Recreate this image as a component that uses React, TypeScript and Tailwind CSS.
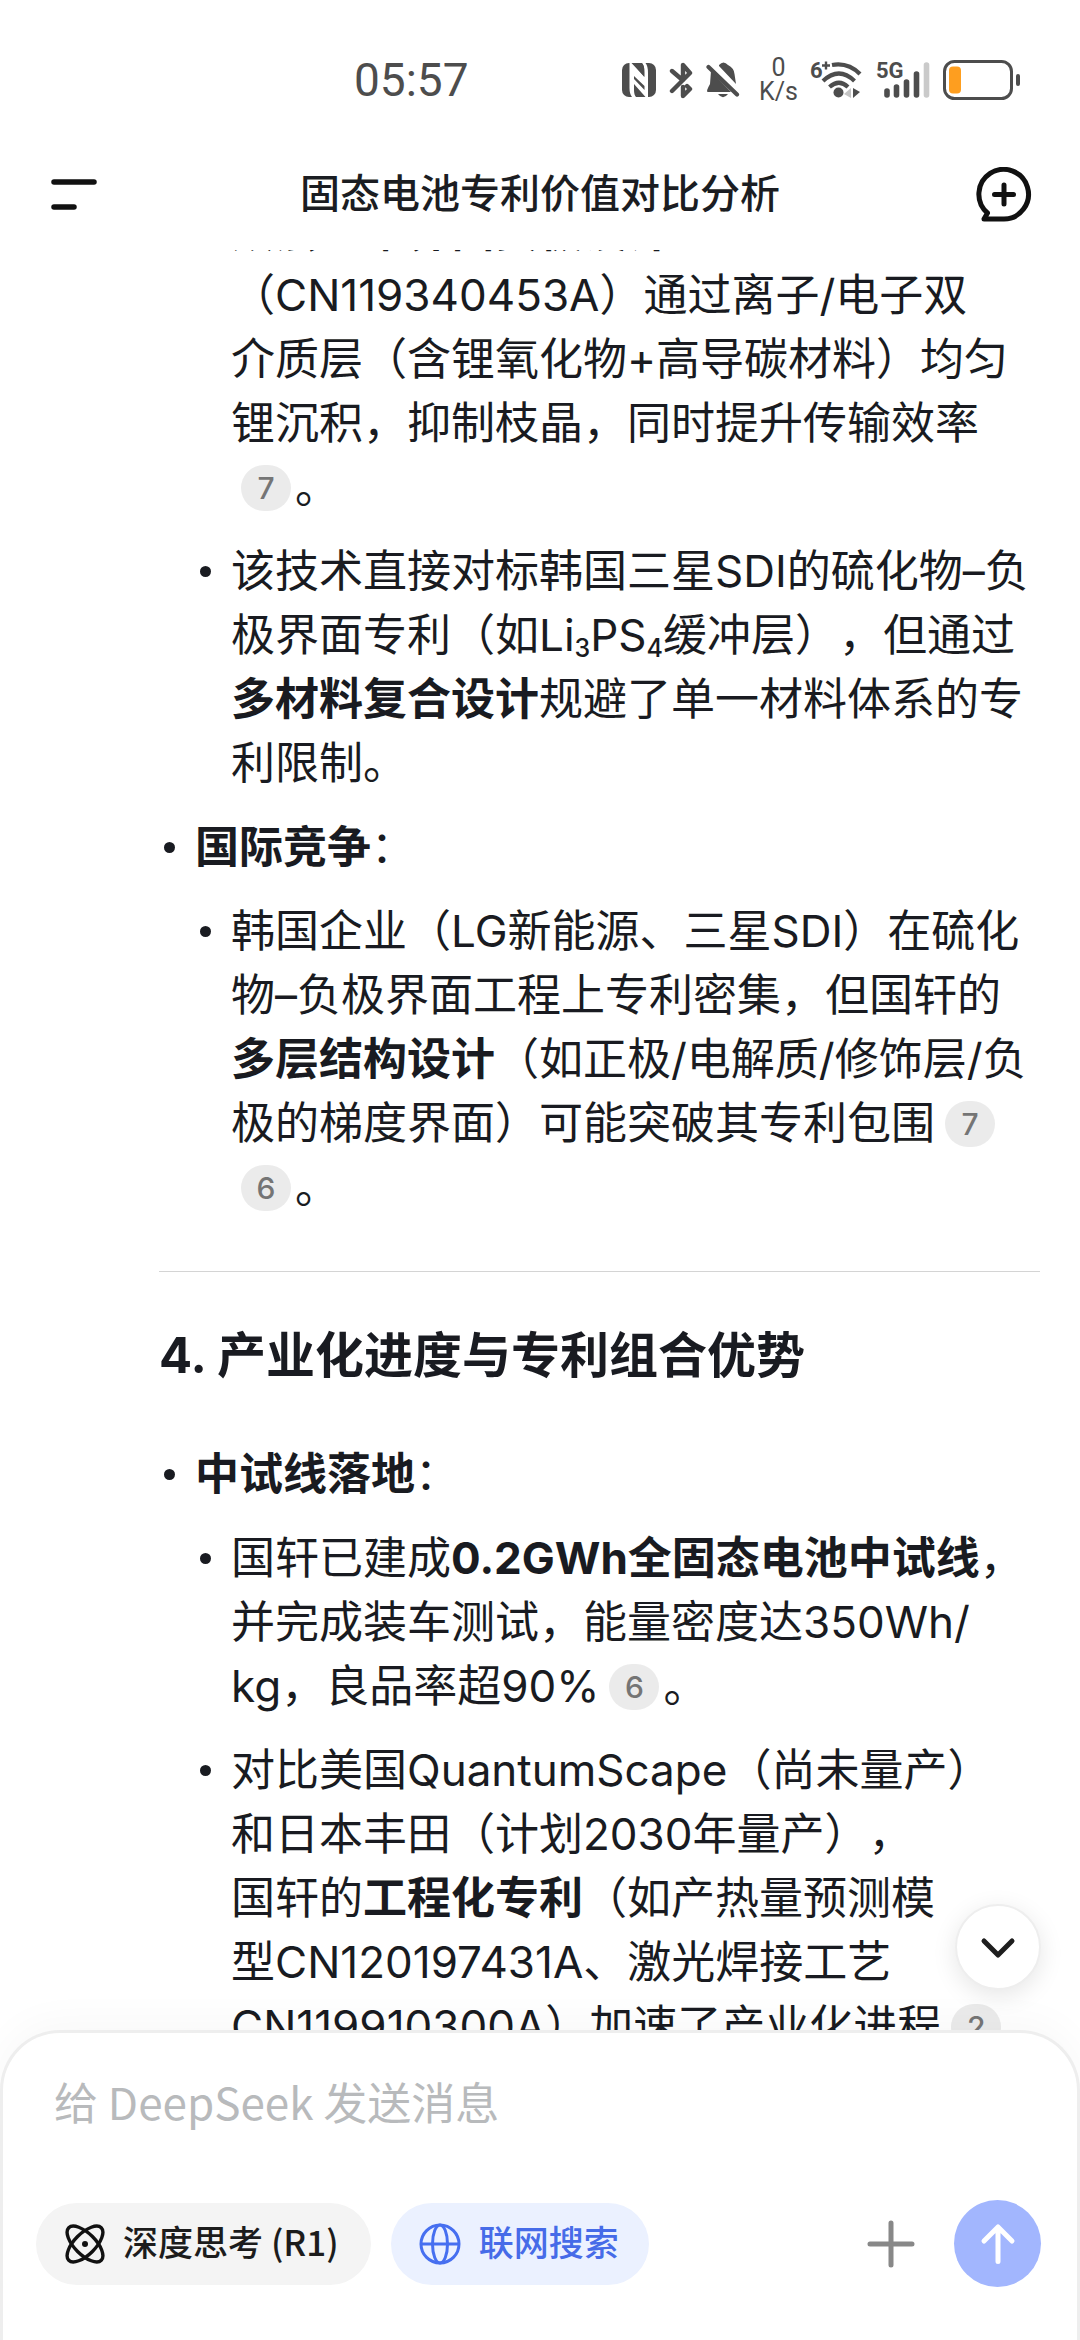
import React from "react";

const cjk = "font-['Noto_Sans_CJK_SC',sans-serif]";

function NfcIcon() {
  return (
    <svg viewBox="0 0 34 34" className="h-[34px] w-[34px]" aria-hidden="true">
      <rect width="34" height="34" rx="7" fill="#4d4d4d" />
      <path d="M7.500 0 H10.500 L22 13.500 V7 Q22 2 20 0 H23.500 Q26 3 26 10 V34 L23.500 34 L12 21 V27 Q12 32 14 34 H10 Q7.500 31 7.500 25Z" fill="#fff" />
      <path d="M9.500 0 H19.500 Q22.500 2 22.500 9 V27 L12 16 V13 L22.500 23 V14Z" fill="#4d4d4d" />
    </svg>
  );
}

function BluetoothIcon() {
  return (
    <svg viewBox="0 0 24 37" className="h-[37px] w-[24px]" fill="none" stroke="#4d4d4d" strokeWidth="4.4" strokeLinecap="round" strokeLinejoin="round" aria-hidden="true">
      <path d="M3 9 L13.500 18 M3 29 L21 11 L14 3 V18 M14 25 V34 L21 27 L18 24" />
    </svg>
  );
}

function MutedBellIcon() {
  return (
    <svg viewBox="0 0 34 37" className="h-[37px] w-[34px]" aria-hidden="true">
      <path d="M13 3 Q17.500 -2 22 3 Q28 6 28.500 12 L30 22 L13 4Z" fill="#4d4d4d" />
      <path d="M5 9 L25 30 H1.500 Q0 29 4 22Z" fill="#4d4d4d" />
      <path d="M12 32 H22 Q17 38.500 12 32Z" fill="#4d4d4d" />
      <path d="M2.500 5 L31 32.500" stroke="#4d4d4d" strokeWidth="4.200" strokeLinecap="round" />
    </svg>
  );
}

function WifiIcon() {
  return (
    <svg viewBox="0 0 52 38" className="h-[38px] w-[52px] overflow-visible" aria-hidden="true">
      <g fill="none" stroke="#4d4d4d" strokeWidth="4.2">
        <path d="M21 4 Q37 1 49 13" />
        <path d="M12 20 Q28 5 43.500 20" />
        <path d="M18.500 26 Q28 17.500 37 26" />
      </g>
      <circle cx="27.500" cy="31.500" r="5" fill="#4d4d4d" />
      <path d="M33 33 L40 27 V37Z" fill="#c4c4c4" />
      <path d="M42 27 L49 31 L42 37Z" fill="#4d4d4d" />
      <text x="-1" y="17" fontSize="22" fontWeight="700" fontFamily="Roboto, sans-serif" fill="#4d4d4d">6</text>
      <path d="M11 4.500 H19 M15 0.500 V8.500" stroke="#4d4d4d" strokeWidth="2.400" />
    </svg>
  );
}

function SignalIcon() {
  return (
    <svg viewBox="0 0 54 38" className="h-[38px] w-[54px] overflow-visible" aria-hidden="true">
      <g stroke="#4d4d4d" strokeWidth="5.600" strokeLinecap="round">
        <path d="M11 30 V34" />
        <path d="M20.500 26 V34" />
        <path d="M30.500 21 V34" />
        <path d="M40.500 13 V34" />
        <path d="M50.500 4 V34" stroke="#cacaca" />
      </g>
      <text x="0" y="17" fontSize="22" fontWeight="700" fontFamily="Roboto, sans-serif" fill="#4d4d4d" stroke="#fff" strokeWidth="3" paintOrder="stroke">5G</text>
    </svg>
  );
}

function BatteryIcon() {
  return (
    <svg viewBox="0 0 78 40" className="h-[40px] w-[78px]" aria-hidden="true">
      <rect x="1.500" y="1.500" width="67" height="37" rx="10" fill="none" stroke="#4d4d4d" strokeWidth="3" />
      <rect x="6" y="6.500" width="12" height="27" rx="4" fill="#fe9e1f" />
      <rect x="73" y="14" width="4" height="12" rx="2" fill="#4d4d4d" />
    </svg>
  );
}

function StatusBar() {
  return (
    <div className="flex h-[140px] shrink-0 items-center justify-between pt-5 pr-[59px] pl-[354px] text-[#4d4d4d]">
      <span className="font-[Roboto,sans-serif] text-[46px] leading-[60px]">05:57</span>
      <div className="flex items-center gap-[13px]">
        <NfcIcon />
        <BluetoothIcon />
        <MutedBellIcon />
        <div className="ml-1.5 flex flex-col items-center font-[Roboto,sans-serif] text-[25px] leading-[24px]">
          <span>0</span>
          <span>K/s</span>
        </div>
        <WifiIcon />
        <SignalIcon />
        <BatteryIcon />
      </div>
    </div>
  );
}

function Header() {
  return (
    <header className="flex h-[110px] shrink-0 items-center justify-between px-12">
      <button type="button" aria-label="菜单">
        <svg viewBox="0 0 56 56" className="size-14" stroke="#111" strokeWidth="5.500" strokeLinecap="round" aria-hidden="true">
          <path d="M6 15 H46" />
          <path d="M6 40 H26" />
        </svg>
      </button>
      <h1 className={`${cjk} pb-2 text-[40px] leading-[56px] font-medium text-[#1b1d22]`}>固态电池专利价值对比分析</h1>
      <button type="button" aria-label="新对话">
        <svg viewBox="0 0 56 56" className="size-14" fill="none" stroke="#111" strokeWidth="5" strokeLinecap="round" strokeLinejoin="round" aria-hidden="true">
          <path d="M28 52 H8 L11.500 46 A24.800 24.800 0 1 1 28 52Z" />
          <path d="M18.500 27.500 H37.500 M28 18 V37" />
        </svg>
      </button>
    </header>
  );
}

function Cite({ n }: { n: number }) {
  return (
    <a
      href={`#cite-${n}`}
      className="mr-1 mb-[6px] ml-[10px] inline-flex h-[46px] w-[50px] items-center justify-center rounded-full bg-[#ebebeb] align-middle text-[30px] leading-none font-medium text-[#757575]"
    >
      {n}
    </a>
  );
}

function Sub({ children }: { children: React.ReactNode }) {
  return <sub className="text-[25px] font-medium">{children}</sub>;
}

function Item({ children }: { children: React.ReactNode }) {
  return (
    <li className="flex">
      <span className="flex h-16 w-9 shrink-0 items-center pl-[5px]" aria-hidden="true">
        <span className="size-[11px] rounded-full bg-[#191b21]" />
      </span>
      <div className="min-w-0 flex-1">{children}</div>
    </li>
  );
}

function Answer() {
  return (
    <article className="-mt-[51px] pr-10 pl-[159px] font-[Inter,'Noto_Sans_CJK_SC',sans-serif] text-[44px] leading-[64px] text-[#191b21] [text-spacing-trim:space-all]">
      <ul className="flex flex-col gap-5">
        <li className="pl-9">
          <ul className="flex flex-col gap-5">
            <Item>
              <p>
                <strong>双层三维界面负极设计</strong>
                <br />
                （CN119340453A）通过离子/电子双
                <br />
                介质层（含锂氧化物+高导碳材料）均匀
                <br />
                锂沉积，抑制枝晶，同时提升传输效率
                <br />
                <Cite n={7} />。
              </p>
            </Item>
            <Item>
              <p>
                该技术直接对标韩国三星SDI的硫化物–负
                <br />
                极界面专利（如Li<Sub>3</Sub>PS<Sub>4</Sub>缓冲层），但通过
                <br />
                <strong>多材料复合设计</strong>规避了单一材料体系的专
                <br />
                利限制。
              </p>
            </Item>
          </ul>
        </li>
        <Item>
          <p>
            <strong>国际竞争</strong>：
          </p>
          <ul className="mt-5 flex flex-col gap-5">
            <Item>
              <p>
                韩国企业（LG新能源、三星SDI）在硫化
                <br />
                物–负极界面工程上专利密集，但国轩的
                <br />
                <strong>多层结构设计</strong>（如正极/电解质/修饰层/负
                <br />
                极的梯度界面）可能突破其专利包围
                <Cite n={7} />
                <br />
                <Cite n={6} />。
              </p>
            </Item>
          </ul>
        </Item>
      </ul>
      <hr className="mt-[52px] border-t border-[#d4d4d4]" />
      <h2 className="mt-12 text-[49px] leading-[72px] font-bold">4. 产业化进度与专利组合优势</h2>
      <ul className="mt-[50px]">
        <Item>
          <p>
            <strong>中试线落地</strong>：
          </p>
          <ul className="mt-5 flex flex-col gap-5">
            <Item>
              <p>
                国轩已建成<strong>0.2GWh全固态电池中试线</strong>，
                <br />
                并完成装车测试，能量密度达350Wh/
                <br />
                kg，良品率超90%
                <Cite n={6} />。
              </p>
            </Item>
            <Item>
              <p>
                对比美国QuantumScape（尚未量产）
                <br />
                和日本丰田（计划2030年量产），
                <br />
                国轩的<strong>工程化专利</strong>（如产热量预测模
                <br />
                型CN120197431A、激光焊接工艺
                <br />
                CN119910300A）加速了产业化进程
                <Cite n={2} />
              </p>
            </Item>
          </ul>
        </Item>
      </ul>
    </article>
  );
}

function Composer() {
  return (
    <form
      className={`${cjk} relative flex shrink-0 flex-col rounded-t-[60px] border-3 border-b-0 border-[#eeeeee] bg-white pt-7 pr-9 pb-[53px] pl-[33px] shadow-[0_-8px_40px_rgba(0,0,0,0.03)]`}
      onSubmit={(e) => e.preventDefault()}
    >
      <button
        type="button"
        aria-label="滚动到底部"
        className="absolute -top-[129px] right-9 flex size-[86px] items-center justify-center rounded-full border-2 border-[#eeeeee] bg-white shadow-[0_6px_24px_rgba(0,0,0,0.1)]"
      >
        <svg viewBox="0 0 40 40" className="size-10" fill="none" stroke="#1e1e1e" strokeWidth="5" strokeLinecap="round" strokeLinejoin="round" aria-hidden="true">
          <path d="M6 14 L20 28 L34 14" />
        </svg>
      </button>
      <input
        type="text"
        aria-label="给 DeepSeek 发送消息"
        placeholder="给 DeepSeek 发送消息"
        className="ml-[18px] h-20 min-w-0 text-[44px] text-[#191b21] outline-none placeholder:text-[#b8babc] placeholder:opacity-100"
      />
      <div className="mt-[59px] flex items-center">
        <button type="button" className="flex h-[82px] items-center gap-[18px] rounded-full bg-[#f4f4f4] pr-8 pl-[29px] text-[35px] font-medium text-[#1c1c1c]">
          <svg viewBox="0 0 40 40" className="size-10" fill="none" stroke="#111" strokeWidth="3.400" aria-hidden="true">
            <ellipse cx="20" cy="20" rx="23" ry="10.500" transform="rotate(45 20 20)" />
            <ellipse cx="20" cy="20" rx="23" ry="10.500" transform="rotate(-45 20 20)" />
            <circle cx="20" cy="20" r="3" fill="#111" stroke="none" />
          </svg>
          <span className="pb-1">深度思考 (R1)</span>
        </button>
        <button type="button" aria-pressed="true" className="ml-5 flex h-[82px] items-center gap-[18px] rounded-full bg-[#ebf1ff] pr-[30px] pl-7 text-[35px] font-medium text-[#466be8]">
          <svg viewBox="0 0 42 42" className="size-[42px]" fill="none" stroke="#466ff0" strokeWidth="3" aria-hidden="true">
            <circle cx="21" cy="21" r="19" />
            <ellipse cx="21" cy="21" rx="7.500" ry="19" />
            <path d="M2 21 H40" />
          </svg>
          <span className="pb-1">联网搜索</span>
        </button>
        <button type="button" aria-label="添加附件" className="mr-[38px] ml-auto">
          <svg viewBox="0 0 50 50" className="size-[50px]" stroke="#888" strokeWidth="5" strokeLinecap="round" aria-hidden="true">
            <path d="M4 25 H46 M25 4 V46" />
          </svg>
        </button>
        <button type="submit" aria-label="发送" className="flex size-[87px] items-center justify-center rounded-full bg-[#a2b6fe]">
          <svg viewBox="0 0 44 44" className="size-11" fill="none" stroke="#fff" strokeWidth="5" strokeLinecap="round" strokeLinejoin="round" aria-hidden="true">
            <path d="M22 39.500 V5 M8 19 L22 5 L36 19" />
          </svg>
        </button>
      </div>
    </form>
  );
}

export default function App() {
  return (
    <div className="flex h-screen flex-col overflow-hidden bg-white">
      <StatusBar />
      <Header />
      <main className="min-h-0 flex-1 overflow-hidden">
        <Answer />
      </main>
      <Composer />
    </div>
  );
}
